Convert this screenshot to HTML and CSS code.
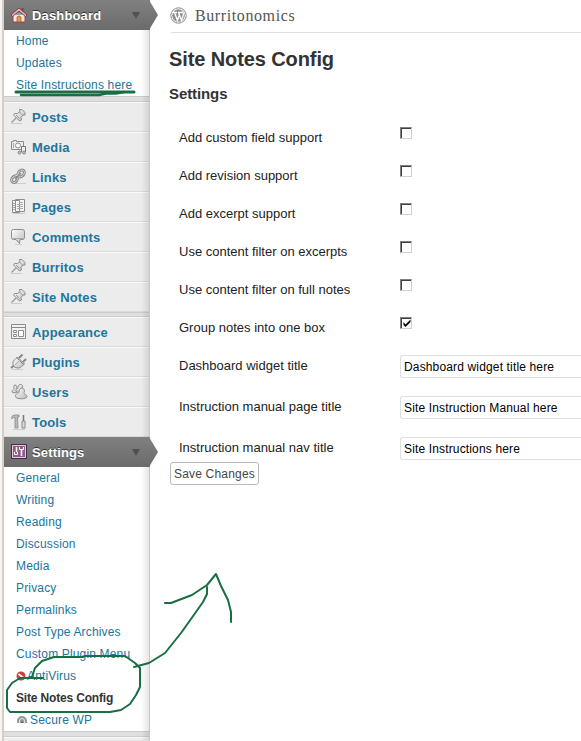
FILE: index.html
```html
<!DOCTYPE html>
<html lang="en">
<head>
<meta charset="utf-8">
<title>Site Notes Config</title>
<link rel="stylesheet" href="styles.css">
</head>
<body>
<svg class="defs" aria-hidden="true">
  <linearGradient id="metal" x1="0" y1="0" x2="1" y2="1"><stop offset="0" stop-color="#fff"/><stop offset="1" stop-color="#bbb"/></linearGradient>
  <linearGradient id="bar" x1="0" y1="0" x2="0" y2="1"><stop offset="0" stop-color="#808080"/><stop offset="1" stop-color="#6b6b6b"/></linearGradient>
  <symbol id="pin" viewBox="0 0 18 18"><path d="M1 15.500h11" stroke="#ccc"/><path d="M1.500 14.500 6 10" stroke="#999" stroke-width="1.300"/><path d="M9.500 1.500h2.500l3 3V7h-2l-2 2.500.5 2.500-2 1L3.500 7l1-1.500H7.500L10 3.500z" fill="url(#metal)" stroke="#8c8c8c"/><path d="m9.500 4 3.500 3.500M6 7l3.500 3.500" stroke="#999"/></symbol>
  <symbol id="media" viewBox="0 0 18 18"><path d="M1.500 3.500h2v-1h3v1h7v8h-12z" fill="#eee" stroke="#8c8c8c"/><circle cx="8" cy="7.500" r="2.500" fill="#fff" stroke="#8c8c8c"/><path d="M3.500 5v5" stroke="#aaa"/><path d="M11.500 14V8.500h4V14" fill="#eee" stroke="#777"/><circle cx="9.500" cy="14.500" r="1.500" fill="#bbb" stroke="#888"/><circle cx="14" cy="14.500" r="1.500" fill="#bbb" stroke="#888"/></symbol>
  <symbol id="links" viewBox="0 0 18 18"><path d="M4 15.500h12" stroke="#ccc"/><g fill="none"><path d="M8 6.500c0-3 2-4.500 4-4.500s3 2 2 4-3 3-5 3M8 8.500c0 3-2 6-4 6s-3-2-2-4 3-3 5-3" stroke="#888" stroke-width="2.800"/><path d="M8 6.500c0-3 2-4.500 4-4.500s3 2 2 4-3 3-5 3M8 8.500c0 3-2 6-4 6s-3-2-2-4 3-3 5-3" stroke="#ddd"/><path d="m5 11 6-6" stroke="#888" stroke-width="1.500"/></g></symbol>
  <symbol id="pages" viewBox="0 0 18 18"><path d="M2.500 2.500h7v12h-7zM5.500 1.500h9v12h-9z" fill="#f5f5f5" stroke="#8c8c8c"/><path d="M3 5.500h2M3 7.500h2M3 9.500h2M3 11.500h2M9 4.500h4M7 6.500h6M7 8.500h6M7 10.500h6" stroke="#aaa"/><path d="M3 15.500h12" stroke="#ccc"/></symbol>
  <symbol id="comments" viewBox="0 0 18 18"><path d="M5 16.500h7" stroke="#ccc"/><path d="M3.500 1.500h9q2 0 2 2v6q0 2-2 2H10l-.5 4-3.500-4H3.500q-2 0-2-2v-6q0-2 2-2z" fill="url(#metal)" stroke="#8c8c8c"/><path d="M2.500 10.500h11" stroke="#aaa"/></symbol>
  <symbol id="appearance" viewBox="0 0 18 18"><path d="M1.500 1.500h14v14h-14z" fill="#f2f2f2" stroke="#8c8c8c"/><path d="M2 4.500h13" stroke="#888"/><path d="M8.500 7.500h5v6h-5zM3.500 7.500h3v2h-3zM3.500 11.500h3v2h-3z" fill="#fff" stroke="#8c8c8c"/></symbol>
  <symbol id="plugins" viewBox="0 0 18 18"><path d="M2 16.500h11" stroke="#ccc"/><path d="m1 15 3-2.500" stroke="#888" stroke-width="2"/><path d="M4 13.500c-2-3-1-6 1-7L7.500 4l7 7-3 2.500c-2 2-5 2-7.500 0z" fill="url(#metal)" stroke="#888"/><path d="m6.500 4.500 7 7" stroke="#888"/><path d="m9 5 3.500-3.500M13 9l3-3" stroke="#888" stroke-width="2"/><path d="m5 12 5-5" stroke="#aaa"/></symbol>
  <symbol id="users" viewBox="0 0 18 18"><g fill="url(#metal)" stroke="#8c8c8c"><path d="M2 9c0-2.500 2-2.500 2-3.500S3 2 5 2s2 2.500 1.500 3.500S8 8 7 9 2 10 2 9z"/><path d="M6 7.500c0-2 2-2 2-3s0-3 2.500-3S13 3.500 12 5s1 3 0 4-6 .5-6-1.500z"/><path d="M5.500 13.500c0-4 3.500-3 3.500-4.500s1-4 3-4 3 3 2 4.500 3 2 3 4c0 3-11.500 3-11.500 0z"/></g></symbol>
  <symbol id="tools" viewBox="0 0 18 18"><path d="M1.500 5.500Q1.500 2 5 2h4v2H7.500L8 15H5V4.500H3.500l-1 1z" fill="#bbb" stroke="#888" stroke-width=".8"/><path d="M13.500 2v6" stroke="#777" stroke-width="1.500"/><path d="M12 8h3v7h-3z" fill="#ddd" stroke="#888"/><path d="M3 16.500h12" stroke="#ccc"/></symbol>
  <symbol id="house" viewBox="0 0 18 18"><path d="M3 8h12v8H3z" fill="#ffe2dc" stroke="#894c4c"/><path d="M12.500 2v5" stroke="#7b4444" stroke-width="2"/><path d="m1 9 8-7 8 7-1.500 1.500L9 5l-6.500 5.500z" fill="#efb4ae" stroke="#6d3535" stroke-width=".8"/><path d="M7 16v-5q2-2 4 0v5z" fill="#e69b48" stroke="#96582e" stroke-width=".7"/><path d="M7 8h4" stroke="#69a9d8" stroke-width="2"/></symbol>
  <symbol id="sliders" viewBox="0 0 18 18"><path d="M1.500 1.500h15v14h-15z" fill="#8d5f86" stroke="#4b2948"/><path d="M2.500 2.500h13v12h-13z" fill="none" stroke="#e2cbe0"/><path d="M6.500 4v5M11.500 7v6" stroke="#fff" stroke-width="1.500"/><path d="M4.500 9v2.500h3V9M9.500 4v2.500h4V4" fill="none" stroke="#fff"/></symbol>
</svg>
<div class="layout">
  <nav class="sidebar">
    <div class="menu current"><svg class="icon"><use href="#house"/></svg>Dashboard<i class="caret"></i><svg class="tip" viewBox="0 0 9 30"><path d="M0 0 9 15 0 30z" fill="url(#bar)"/></svg></div>
    <div class="submenu"><a>Home</a><a>Updates</a><a>Site Instructions here</a></div>
    <div class="separator"></div>
    <div class="menu"><svg class="icon"><use href="#pin"/></svg>Posts</div>
    <div class="menu"><svg class="icon"><use href="#media"/></svg>Media</div>
    <div class="menu"><svg class="icon"><use href="#links"/></svg>Links</div>
    <div class="menu"><svg class="icon"><use href="#pages"/></svg>Pages</div>
    <div class="menu"><svg class="icon"><use href="#comments"/></svg>Comments</div>
    <div class="menu"><svg class="icon"><use href="#pin"/></svg>Burritos</div>
    <div class="menu"><svg class="icon"><use href="#pin"/></svg>Site Notes</div>
    <div class="separator short"></div>
    <div class="menu"><svg class="icon"><use href="#appearance"/></svg>Appearance</div>
    <div class="menu"><svg class="icon"><use href="#plugins"/></svg>Plugins</div>
    <div class="menu"><svg class="icon"><use href="#users"/></svg>Users</div>
    <div class="menu"><svg class="icon"><use href="#tools"/></svg>Tools</div>
    <div class="menu current"><svg class="icon"><use href="#sliders"/></svg>Settings<i class="caret"></i><svg class="tip" viewBox="0 0 9 30"><path d="M0 0 9 15 0 30z" fill="url(#bar)"/></svg></div>
    <div class="submenu">
      <a>General</a><a>Writing</a><a>Reading</a><a>Discussion</a><a>Media</a><a>Privacy</a><a>Permalinks</a><a>Post Type Archives</a><a>Custom Plugin Menu</a>
      <a><svg class="mini virus" viewBox="0 0 10 10"><circle cx="5" cy="5" r="4.500" fill="#d7383b"/><path d="m2.500 3 5 4" stroke="#fff" stroke-width="1.800"/></svg>AntiVirus</a>
      <a class="active">Site Notes Config</a>
      <a><svg class="mini secure" viewBox="0 0 12 10"><path d="M1 8V6a5 5 0 0 1 10 0v2z" fill="#999"/><path d="M3.500 9V6a2.500 2.500 0 0 1 5 0v3" fill="none" stroke="#e5e5e5"/><path d="M5 8V6.500h2V8" fill="#666"/></svg>Secure WP</a>
    </div>
    <div class="separator"></div>
    <div class="menu"></div>
  </nav>
  <main>
    <header>
      <svg class="logo" viewBox="0 0 17 17"><circle cx="8.500" cy="8.500" r="7.700" fill="#fff" stroke="#888"/><circle cx="8.500" cy="8.500" r="6.300" fill="#909090"/><path d="M3 5.500h4M8 5.500h4M4.500 5.500l3 8 1.700-5M8.500 5.500l3 8 2-6q0-2-1.500-3" fill="none" stroke="#fff" stroke-width="1.300"/></svg>
      <span class="site">Burritonomics</span>
    </header>
    <h2>Site Notes Config</h2>
    <h3>Settings</h3>
    <form>
      <label class="row"><span>Add custom field support</span><input type="checkbox"></label>
      <label class="row"><span>Add revision support</span><input type="checkbox"></label>
      <label class="row"><span>Add excerpt support</span><input type="checkbox"></label>
      <label class="row"><span>Use content filter on excerpts</span><input type="checkbox"></label>
      <label class="row"><span>Use content filter on full notes</span><input type="checkbox"></label>
      <label class="row"><span>Group notes into one box</span><i class="checked"><svg viewBox="0 0 8 8"><path d="M.5 2v3l2 2 5-5V-.5l-5 5z"/></svg></i></label>
      <label class="row field"><span>Dashboard widget title</span><b class="text">Dashboard widget title here</b></label>
      <label class="row field"><span>Instruction manual page title</span><b class="text">Site Instruction Manual here</b></label>
      <label class="row field"><span>Instruction manual nav title</span><b class="text">Site Instructions here</b></label>
      <button type="button">Save Changes</button>
    </form>
  </main>
</div>
<svg class="ink" viewBox="0 0 581 741">
  <path d="M16 92H134" stroke-width="3"/><path d="M21 95H99L106 93.500H116L124 92" stroke-width="2.500"/>
  <path d="M43 678H20L12 683 7 690V708L10 712H110L121 710 130 704 136 695 140 687V668L135 663 125 656H85L82 657H54L42 661 35 668 32 677"/>
  <path d="M134 667 149 663 165 653 181 633 191 619 203 602 207 594V587"/>
  <path d="M165 603H171L192 595 207 585 216 574 221 586 228 600 231 612V622"/>
</svg>
</body>
</html>
```
FILE: styles.css
```css
* { box-sizing: border-box; }
body {
  margin: 0;
  height: 741px;
  overflow: hidden;
  background: #fff;
  color: #222;
  font-family: "Liberation Sans", Arial, sans-serif;
  font-size: 13px;
}
.defs { position: absolute; width: 0; height: 0; }
.layout { display: flex; height: 741px; }
.sidebar {
  position: relative;
  flex: 0 0 150px;
  border-left: 2px solid #f7f5f2;
  box-shadow: inset 2px 0 #d5cec4;
  padding-left: 2px;
}
.sidebar::after {
  content: "";
  position: absolute;
  top: 0;
  bottom: 0;
  right: 0;
  width: 8px;
  border-right: 1px solid #c8c8c8;
  background: linear-gradient(90deg, transparent, rgba(0, 0, 0, .1));
}
.menu {
  position: relative;
  display: flex;
  align-items: center;
  height: 30px;
  padding: 1px 0 0 6px;
  background: #ececec;
  border-top: 1px solid #fafafa;
  border-bottom: 1px solid #dadada;
  color: #21759b;
  font-weight: bold;
  letter-spacing: .15px;
}
.icon { width: 18px; height: 18px; margin: -1px 4px 0 0; fill: none; }
.menu.current {
  z-index: 1;
  border: 0;
  background: linear-gradient(#808080, #6b6b6b);
  color: #fff;
  text-shadow: 0 -1px 0 #333;
}
.caret {
  position: absolute;
  left: 128px;
  top: 12px;
  border: 4px solid transparent;
  border-top: 7px solid #505050;
  border-bottom: 0;
}
.tip { position: absolute; left: 145px; top: 0; width: 9px; height: 30px; }
.submenu a {
  display: flex;
  align-items: center;
  height: 22px;
  padding-left: 12px;
  color: #21759b;
  font-size: 12px;
  letter-spacing: .16px;
  white-space: nowrap;
}
.submenu .active { color: #333; font-weight: bold; letter-spacing: -.17px; }
.mini { height: 10px; }
.virus { width: 10px; margin-right: 1px; }
.secure { width: 12px; margin-right: 2px; }
.separator {
  height: 6px;
  background: #dfdfdf;
  border-top: 1px solid #ccc;
  border-bottom: 1px solid #ccc;
}
.separator.short { height: 5px; }
main { flex: 1; min-width: 0; padding-left: 19px; }
header {
  display: flex;
  align-items: center;
  height: 33px;
  margin-left: 2px;
  border-bottom: 1px solid #dfdfdf;
}
.logo { width: 17px; height: 17px; margin: -1px 8px 0 -1px; }
.site {
  color: #555;
  font-family: "Liberation Serif", serif;
  font-size: 16px;
  letter-spacing: .6px;
}
h2, h3 { margin: 0; color: #333; white-space: nowrap; }
h2 { padding-top: 14px; font-size: 20px; line-height: 24px; letter-spacing: -.1px; }
h3 { margin-top: 14px; font-size: 15px; line-height: 18px; letter-spacing: -.1px; }
form { padding-top: 16px; }
.row { display: flex; height: 38px; padding-left: 10px; }
.row > span { flex: 0 0 221px; padding-top: 11px; line-height: 16px; }
.row input, .checked {
  appearance: none;
  flex: none;
  width: 12px;
  height: 12px;
  margin: 8px 0 0;
  background: #fff;
  border: 1px solid #d4d0c8;
  border-top-color: #808080;
  border-left-color: #808080;
  box-shadow: inset 1px 1px #404040;
}
.checked svg { display: block; width: 8px; height: 8px; margin: 2px 0 0 2px; overflow: visible; }
.field { height: 41px; }
.text {
  flex: 1;
  height: 23px;
  margin-top: 8px;
  padding-left: 3px;
  border: 1px solid #dfdfdf;
  border-right: 0;
  border-radius: 3px 0 0 3px;
  color: #000;
  font-size: 12px;
  font-weight: normal;
  line-height: 22px;
  letter-spacing: .15px;
}
button {
  display: block;
  width: 89px;
  height: 23px;
  margin: -8px 0 0 1px;
  padding: 0;
  background: #fff;
  border: 1px solid #bbb;
  border-radius: 3px;
  color: #464646;
  font-family: inherit;
  font-size: 12px;
  letter-spacing: .2px;
}
.ink {
  position: absolute;
  z-index: 5;
  left: 0;
  top: 0;
  width: 581px;
  height: 741px;
  fill: none;
  stroke: #196f43;
  stroke-width: 2;
  stroke-linejoin: round;
  stroke-linecap: round;
  pointer-events: none;
}
```
